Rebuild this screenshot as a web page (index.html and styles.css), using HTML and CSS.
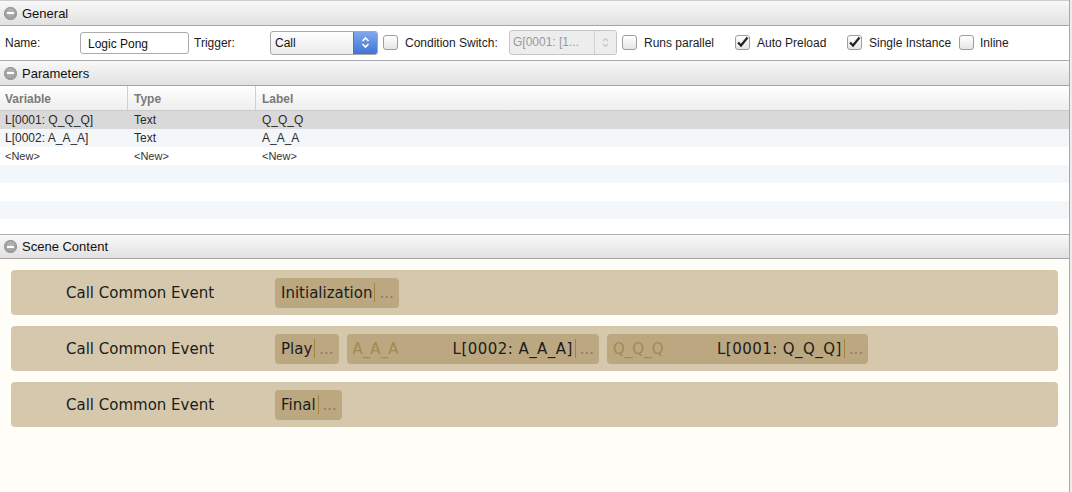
FILE: index.html
```html
<!DOCTYPE html>
<html>
<head>
<meta charset="utf-8">
<link rel="stylesheet" href="styles.css">
</head>
<body>
<div class="app">
  <section class="panel">
    <div class="phead"><span class="collapse"></span><span>General</span></div>
    <div class="form-row">
      <span class="lbl name-lbl">Name:</span>
      <span class="input">Logic Pong</span>
      <span class="lbl trig-lbl">Trigger:</span>
      <span class="select">
        <span class="sel-text">Call</span>
        <span class="sel-btn">
          <svg width="9" height="13" viewBox="0 0 9 13"><path d="M1.5 5 L4.5 2 L7.5 5" fill="none" stroke="#fff" stroke-width="1.6"/><path d="M1.5 8 L4.5 11 L7.5 8" fill="none" stroke="#fff" stroke-width="1.6"/></svg>
        </span>
      </span>
      <span class="chk cond-chk"></span>
      <span class="lbl cond-lbl">Condition Switch:</span>
      <span class="select disabled">
        <span class="sel-text">G[0001: [1...</span>
        <span class="sel-btn">
          <svg width="9" height="13" viewBox="0 0 9 13"><path d="M2 5 L4.5 2.5 L7 5" fill="none" stroke="#c4c4c4" stroke-width="1.2"/><path d="M2 8 L4.5 10.5 L7 8" fill="none" stroke="#c4c4c4" stroke-width="1.2"/></svg>
        </span>
      </span>
      <label class="chk-item first"><span class="chk"></span><span>Runs parallel</span></label>
      <label class="chk-item"><span class="chk checked"><svg width="15" height="15" viewBox="0 0 15 15"><path d="M3 7.5 L6 10.5 L12.5 2.5" fill="none" stroke="#222" stroke-width="2.2"/></svg></span><span>Auto Preload</span></label>
      <label class="chk-item"><span class="chk checked"><svg width="15" height="15" viewBox="0 0 15 15"><path d="M3 7.5 L6 10.5 L12.5 2.5" fill="none" stroke="#222" stroke-width="2.2"/></svg></span><span>Single Instance</span></label>
      <label class="chk-item last"><span class="chk"></span><span>Inline</span></label>
    </div>
  </section>

  <section class="panel">
    <div class="phead"><span class="collapse"></span><span>Parameters</span></div>
    <div class="table">
      <div class="trow thead">
        <div class="c c1">Variable</div><div class="c c2">Type</div><div class="c c3">Label</div>
      </div>
      <div class="trow sel"><div class="c c1">L[0001: Q_Q_Q]</div><div class="c c2">Text</div><div class="c c3">Q_Q_Q</div></div>
      <div class="trow alt"><div class="c c1">L[0002: A_A_A]</div><div class="c c2">Text</div><div class="c c3">A_A_A</div></div>
      <div class="trow"><div class="c c1 new">&lt;New&gt;</div><div class="c c2 new">&lt;New&gt;</div><div class="c c3 new">&lt;New&gt;</div></div>
      <div class="trow alt"></div>
      <div class="trow"></div>
      <div class="trow alt"></div>
      <div class="trow short"></div>
    </div>
  </section>

  <section class="panel scene">
    <div class="phead"><span class="collapse"></span><span>Scene Content</span></div>
    <div class="scene-body">
      <div class="card">
        <span class="card-lbl">Call Common Event</span>
        <span class="chips">
          <span class="chip"><span>Initialization</span><span class="sep"></span><span class="dots">...</span></span>
        </span>
      </div>
      <div class="card">
        <span class="card-lbl">Call Common Event</span>
        <span class="chips">
          <span class="chip"><span>Play</span><span class="sep"></span><span class="dots">...</span></span>
          <span class="chip"><span class="plabel">A_A_A</span><span class="pval">L[0002: A_A_A]</span><span class="sep"></span><span class="dots">...</span></span>
          <span class="chip"><span class="plabel wide">Q_Q_Q</span><span class="pval">L[0001: Q_Q_Q]</span><span class="sep"></span><span class="dots">...</span></span>
        </span>
      </div>
      <div class="card">
        <span class="card-lbl">Call Common Event</span>
        <span class="chips">
          <span class="chip"><span>Final</span><span class="sep"></span><span class="dots">...</span></span>
        </span>
      </div>
    </div>
  </section>
</div>
</body>
</html>
```

FILE: styles.css
```css
html, body {
  margin: 0;
  padding: 0;
  background: #ececec;
}
body {
  font-family: "Liberation Sans", Arial, sans-serif;
  font-size: 12px;
  color: #1c1c1c;
}
.app {
  width: 1070px;
  height: 492px;
  border-right: 1px solid #a9a9a9;
  display: flex;
  flex-direction: column;
  background: #fff;
  box-sizing: border-box;
}
.panel {
  display: flex;
  flex-direction: column;
}
.phead {
  height: 25px;
  box-sizing: border-box;
  display: flex;
  align-items: center;
  gap: 5px;
  padding-left: 4px;
  font-size: 13px;
  color: #111;
  background: linear-gradient(#f8f8f8, #e1e1e1);
  border-bottom: 1px solid #a6a6a6;
  white-space: nowrap;
}
.panel:first-child .phead {
  border-top: 1px solid #cdcdcd;
  height: 26px;
}
.collapse {
  width: 13px;
  height: 13px;
  border-radius: 50%;
  background: radial-gradient(circle at 50% 40%, #b9b9b9, #8e8e8e);
  box-shadow: inset 0 0 0 1px #9a9a9a;
  position: relative;
  flex: none;
}
.collapse::after {
  content: "";
  position: absolute;
  left: 3px;
  top: 5.5px;
  width: 7px;
  height: 2px;
  background: #fff;
}

/* form row */
.form-row {
  height: 35px;
  box-sizing: border-box;
  border-bottom: 1px solid #ababab;
  display: flex;
  align-items: center;
  padding-left: 5px;
  padding-bottom: 1px;
  white-space: nowrap;
}
.lbl { flex: none; }
.name-lbl { width: 75px; }
.input {
  width: 109px;
  height: 22px;
  box-sizing: border-box;
  border: 1px solid #ababab;
  border-radius: 3px;
  padding: 4px 0 0 7px;
  font-size: 12px;
  color: #111;
  margin-right: 5px;
  flex: none;
}
.trig-lbl { width: 76px; }
.select {
  width: 108px;
  height: 24px;
  box-sizing: border-box;
  border: 1px solid #a7a7a7;
  border-radius: 3px;
  display: flex;
  align-items: stretch;
  background: linear-gradient(#fdfdfd, #ececec);
  overflow: hidden;
  flex: none;
}
.sel-text {
  flex: 1;
  padding: 4px 0 0 4px;
  color: #111;
}
.sel-btn {
  width: 23px;
  display: flex;
  align-items: center;
  justify-content: center;
  background: linear-gradient(#7fa9ee, #3f73d6);
  border-left: 1px solid #4a74c4;
}
.select.disabled {
  border-color: #c6c6c6;
  background: #ededed;
  margin-left: 12px;
  height: 25px;
}
.select.disabled .sel-text { color: #9a9a9a; padding-left: 3px; }
.select.disabled .sel-btn {
  background: #ededed;
  border-left: 1px solid #d2d2d2;
  width: 21px;
}
.chk {
  width: 15px;
  height: 15px;
  box-sizing: border-box;
  border: 1px solid #9d9d9d;
  border-radius: 3px;
  background: linear-gradient(#ffffff, #e6e6e6);
  flex: none;
  display: flex;
  align-items: center;
  justify-content: center;
  overflow: visible;
}
.chk svg { flex: none; }
.cond-chk { margin-left: 5px; margin-right: 7px; }
.cond-lbl { width: 92px; }
.chk-item {
  width: 112px;
  display: flex;
  align-items: center;
  gap: 7px;
  flex: none;
}
.chk-item.first { margin-left: 5px; width: 113px; }
.chk-item.last { width: auto; gap: 6px; }

/* table */
.table {
  display: flex;
  flex-direction: column;
  border-bottom: 1px solid #aeaeae;
}
.trow {
  height: 18px;
  display: flex;
  align-items: center;
  font-size: 12px;
  color: #2a2a2a;
  flex: none;
}
.trow.thead {
  height: 24px;
  align-items: stretch;
  background: linear-gradient(#ffffff, #eeeeee);
  border-bottom: 1px solid #cbcbcb;
  color: #7a7a7a;
  font-weight: bold;
}
.thead .c { display: flex; align-items: center; padding-top: 1px; }
.thead .c1, .thead .c2 { border-right: 1px solid #d0d0d0; }
.trow.sel { background: #d9d9d9; }
.trow.alt { background: #f4f7fa; }
.trow.short { height: 15px; }
.c { box-sizing: border-box; }
.c1 { width: 128px; padding-left: 5px; }
.c2 { width: 128px; padding-left: 6px; }
.c3 { flex: 1; padding-left: 6px; }
.new { font-size: 11px; color: #333; }

/* scene */
.scene { flex: 1; }
.scene .phead { height: 24px; }
.scene-body {
  flex: 1;
  background: #fffdf8;
  padding: 11px 11px 0 11px;
  display: flex;
  flex-direction: column;
  gap: 11px;
}
.card {
  height: 45px;
  border-radius: 4px;
  background: #d5c8ad;
  display: flex;
  align-items: center;
  padding-left: 55px;
  font-family: "DejaVu Sans", Tahoma, sans-serif;
  font-size: 15px;
  color: #1c1c1c;
  flex: none;
}
.card-lbl { width: 209px; flex: none; }
.chips { display: flex; gap: 8px; }
.chip {
  height: 30px;
  border-radius: 4px;
  background: #bba780;
  display: flex;
  align-items: center;
  padding: 0 5px 0 6px;
}
.plabel {
  width: 100px;
  color: #a08a55;
}
.plabel.wide { width: 104px; }
.pval { letter-spacing: 0.45px; }
.sep {
  width: 1px;
  height: 19px;
  background: #a0843f;
  margin: 0 4px 0 2px;
}
.dots { color: #8e7d5c; }
```
